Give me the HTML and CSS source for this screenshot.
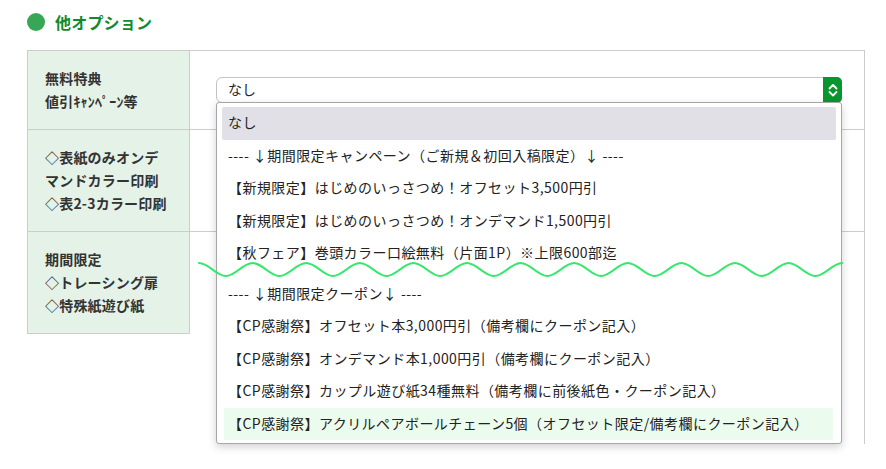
FILE: index.html
```html
<!DOCTYPE html>
<html lang="ja">
<head>
<meta charset="utf-8">
<link rel="stylesheet" href="styles.css">
</head>
<body>
<div class="page">
  <h2 class="heading"><span class="dot"></span><span class="heading-text">他オプション</span></h2>

  <div class="opt-table">
    <div class="th">無料特典<br>値引ｷｬﾝﾍﾟｰﾝ等</div>
    <div class="td td-select">
      <div class="select-wrap">
        <div class="select">
          <span class="select-value">なし</span>
          <span class="select-btn">
            <svg width="10" height="16" viewBox="0 0 10 16"><path d="M1.5 6.5 L5 3 L8.5 6.5 M1.5 10 L5 13.5 L8.5 10" fill="none" stroke="#fff" stroke-width="1.8" stroke-linecap="round" stroke-linejoin="round"/></svg>
          </span>
        </div>
        <ul class="dropdown">
          <li class="opt opt-selected">なし</li>
          <li class="opt">---- ↓期間限定キャンペーン（ご新規＆初回入稿限定）↓ ----</li>
          <li class="opt">【新規限定】はじめのいっさつめ！オフセット3,500円引</li>
          <li class="opt">【新規限定】はじめのいっさつめ！オンデマンド1,500円引</li>
          <li class="opt">【秋フェア】巻頭カラー口絵無料（片面1P）※上限600部迄</li>
          <li class="gap"></li>
          <li class="opt">---- ↓期間限定クーポン↓ ----</li>
          <li class="opt">【CP感謝祭】オフセット本3,000円引（備考欄にクーポン記入）</li>
          <li class="opt">【CP感謝祭】オンデマンド本1,000円引（備考欄にクーポン記入）</li>
          <li class="opt">【CP感謝祭】カップル遊び紙34種無料（備考欄に前後紙色・クーポン記入）</li>
          <li class="opt opt-hover">【CP感謝祭】アクリルペアボールチェーン5個（オフセット限定/備考欄にクーポン記入）</li>
        </ul>
      </div>
    </div>

    <div class="th">◇表紙のみオンデ<br>マンドカラー印刷<br>◇表2-3カラー印刷</div>
    <div class="td"></div>

    <div class="th">期間限定<br>◇トレーシング扉<br>◇特殊紙遊び紙</div>
    <div class="td td-last"></div>
  </div>
  <div class="tail"></div>

  <svg class="wave" width="646" height="19" viewBox="0 0 646 19"><path d="M0 3 C9.76 3 17.04 16 26.8 16 S43.84 3 53.6 3 S70.64 16 80.4 16 S97.44 3 107.2 3 S124.24 16 134 16 S151.04 3 160.8 3 S177.84 16 187.6 16 S204.64 3 214.4 3 S231.44 16 241.2 16 S258.24 3 268 3 S285.04 16 294.8 16 S311.84 3 321.6 3 S338.64 16 348.4 16 S365.44 3 375.2 3 S392.24 16 402 16 S419.04 3 428.8 3 S445.84 16 455.6 16 S472.64 3 482.4 3 S499.44 16 509.2 16 S526.24 3 536 3 S553.04 16 562.8 16 S579.84 3 589.6 3 S606.64 16 616.4 16 S633.44 3 643.2 3" fill="none" stroke="#33e86a" stroke-width="2.2" stroke-linecap="round"/></svg>
</div>
</body>
</html>
```

FILE: styles.css
```css
* { box-sizing: border-box; }

html, body {
  margin: 0;
  padding: 0;
  background: #fff;
}

body {
  font-family: "Noto Sans CJK JP", "Noto Sans", sans-serif;
  color: #222;
}

.page {
  position: relative;
  width: 886px;
  height: 469px;
  padding: 13px 21px 0 27px;
  overflow: hidden;
}

.heading {
  display: flex;
  align-items: center;
  gap: 10px;
  margin: 0;
  height: 18px;
  font-size: 16px;
  line-height: 18px;
  font-weight: 700;
  color: #108a2c;
}

.heading-text {
  letter-spacing: 0.2px;
}

.dot {
  width: 18px;
  height: 18px;
  border-radius: 50%;
  background: #37a655;
  flex: none;
}

.opt-table {
  margin-top: 19px;
  display: grid;
  grid-template-columns: 162px 1fr;
  width: 838px;
  border-top: 1px solid #cccccc;
  border-left: 1px solid #cccccc;
  border-right: 1px solid #cccccc;
}

.th {
  background: #e5f2e8;
  border-right: 1px solid #cccccc;
  border-bottom: 1px solid #cccccc;
  padding: 16px 10px 16px 17px;
  font-size: 14px;
  line-height: 23px;
  font-weight: 700;
  color: #333;
  white-space: nowrap;
  letter-spacing: 0.2px;
}

.td {
  border-bottom: 1px solid #cccccc;
  background: #fff;
}

.td-last {
  border-bottom: none;
}

.td-select {
  display: flex;
  align-items: center;
  padding: 0 22px 0 26px;
}

.tail {
  margin-left: 162px;
  width: 676px;
  height: 110px;
  border-right: 1px solid #cccccc;
}

.select-wrap {
  position: relative;
  width: 100%;
  z-index: 5;
}

.select {
  display: flex;
  align-items: center;
  justify-content: space-between;
  height: 26px;
  border: 1px solid #c4c4c4;
  border-radius: 6px;
  background: #fff;
  padding-left: 11px;
  font-size: 14px;
  line-height: 22px;
  color: #222;
}

.select-value {
  padding-bottom: 2px;
}

.select-btn {
  align-self: stretch;
  width: 19px;
  margin: -1px -1px -1px 0;
  background: #0a962e;
  border-radius: 0 5px 5px 0;
  display: flex;
  align-items: center;
  justify-content: center;
}

.dropdown {
  position: absolute;
  top: 25px;
  left: 0;
  right: 0;
  height: 342px;
  margin: 0;
  list-style: none;
  padding: 4px 5px 2px;
  background: #fff;
  border: 1px solid #a6a6a6;
  border-radius: 3px;
  box-shadow: 0 3px 8px rgba(0, 0, 0, 0.18);
}

.opt {
  height: 32.5px;
  line-height: 30px;
  padding-left: 6px;
  padding-bottom: 2.5px;
  font-size: 14px;
  color: #222;
  white-space: nowrap;
  letter-spacing: 0.45px;
  border-radius: 2px;
}

.opt-selected {
  background: #e1e0e6;
}

.opt-hover {
  background: #ebfcee;
  margin: 0 3px 0 2px;
  padding-left: 4px;
}

.gap {
  height: 8px;
}

.wave {
  position: absolute;
  left: 199px;
  top: 260px;
  z-index: 10;
  overflow: visible;
}
```
